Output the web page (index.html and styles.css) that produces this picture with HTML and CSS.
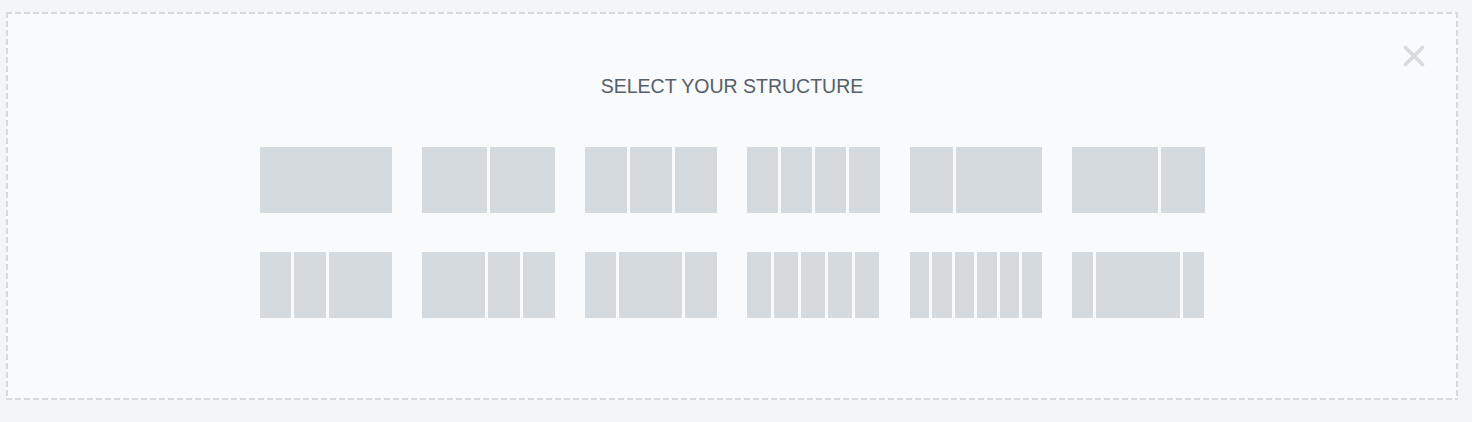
FILE: index.html
```html
<!DOCTYPE html>
<html>
<head>
<meta charset="utf-8">
<link rel="stylesheet" href="styles.css">
</head>
<body>
<div class="page">
  <div class="add-section">
    <button class="close" aria-label="Close">
      <svg width="22" height="22" viewBox="0 0 22 22"><path d="M2.5 2.5L19.5 19.5M19.5 2.5L2.5 19.5" stroke="#d5dadf" stroke-width="3.6" stroke-linecap="round" fill="none"/></svg>
    </button>
    <div class="title">SELECT YOUR STRUCTURE</div>
    <div class="preset-list">
      <div class="preset"><span class="c g1"></span></div>
      <div class="preset"><span class="c g1"></span><span class="c g1"></span></div>
      <div class="preset"><span class="c g1"></span><span class="c g1"></span><span class="c g1"></span></div>
      <div class="preset"><span class="c g1"></span><span class="c g1"></span><span class="c g1"></span><span class="c g1"></span></div>
      <div class="preset"><span class="c g1"></span><span class="c g2"></span></div>
      <div class="preset"><span class="c g2"></span><span class="c g1"></span></div>

      <div class="preset"><span class="c g1"></span><span class="c g1"></span><span class="c g2"></span></div>
      <div class="preset"><span class="c g2"></span><span class="c g1"></span><span class="c g1"></span></div>
      <div class="preset"><span class="c g1"></span><span class="c g2"></span><span class="c g1"></span></div>
      <div class="preset"><span class="c g1"></span><span class="c g1"></span><span class="c g1"></span><span class="c g1"></span><span class="c g1"></span></div>
      <div class="preset"><span class="c g1"></span><span class="c g1"></span><span class="c g1"></span><span class="c g1"></span><span class="c g1"></span><span class="c g1"></span></div>
      <div class="preset"><span class="c g1"></span><span class="c g4"></span><span class="c g1"></span></div>
    </div>
  </div>
</div>
</body>
</html>
```
FILE: styles.css
```css
html, body {
  margin: 0;
  padding: 0;
  background: #f4f5f7;
}
.page {
  padding: 12px 14px 22px 6px;
}
.add-section {
  position: relative;
  height: 388px;
  box-sizing: border-box;
  padding: 2px;
  background:
    repeating-linear-gradient(90deg, #d5dadf 0 6px, transparent 6px 9px) left top / 100% 2px no-repeat,
    repeating-linear-gradient(90deg, #d5dadf 0 6px, transparent 6px 9px) left bottom / 100% 2px no-repeat,
    repeating-linear-gradient(180deg, #d5dadf 0 6px, transparent 6px 9px) left top / 2px 100% no-repeat,
    repeating-linear-gradient(180deg, #d5dadf 0 6px, transparent 6px 9px) right top / 2px 100% no-repeat,
    #f9fafc;
  display: flex;
  flex-direction: column;
  align-items: center;
}
.close {
  position: absolute;
  top: 33px;
  right: 33px;
  width: 22px;
  height: 22px;
  padding: 0;
  border: 0;
  background: none;
  display: flex;
}
.title {
  margin-top: 62px;
  font-family: "Liberation Sans", Arial, sans-serif;
  font-size: 19.5px;
  line-height: 20px;
  color: #556068;
}
.preset-list {
  margin-top: 51px;
  width: 945px;
  display: grid;
  grid-template-columns: repeat(6, 1fr);
  column-gap: 30px;
  row-gap: 39px;
}
.preset {
  height: 66px;
  display: flex;
  gap: 3px;
}
.c {
  background: #d5dadf;
  display: block;
}
.g1 { flex: 1 1 0; }
.g2 { flex: 2 1 0; }
.g4 { flex: 4 1 0; }
```
